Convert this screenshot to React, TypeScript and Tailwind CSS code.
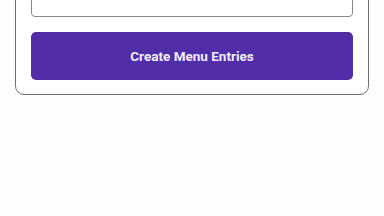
export default function App() {
  return (
    <div className="min-h-screen bg-[#fdfdfd] font-['Roboto',sans-serif] overflow-hidden">
      <section className="mx-[15px] -mt-[40px] w-[354px] rounded-[9px] border border-[#6e6e6e] bg-white px-[15px] pb-[14px]">
        <div className="h-[56px] rounded-[4px] border border-[#8a8a8a] bg-white" />
        <button
          type="button"
          className="mt-[15px] flex h-[48px] w-full items-center justify-center rounded-[5px] bg-[#512da8] text-[13.5px] font-bold text-[#f3eefc]"
        >
          Create Menu Entries
        </button>
      </section>
    </div>
  );
}
